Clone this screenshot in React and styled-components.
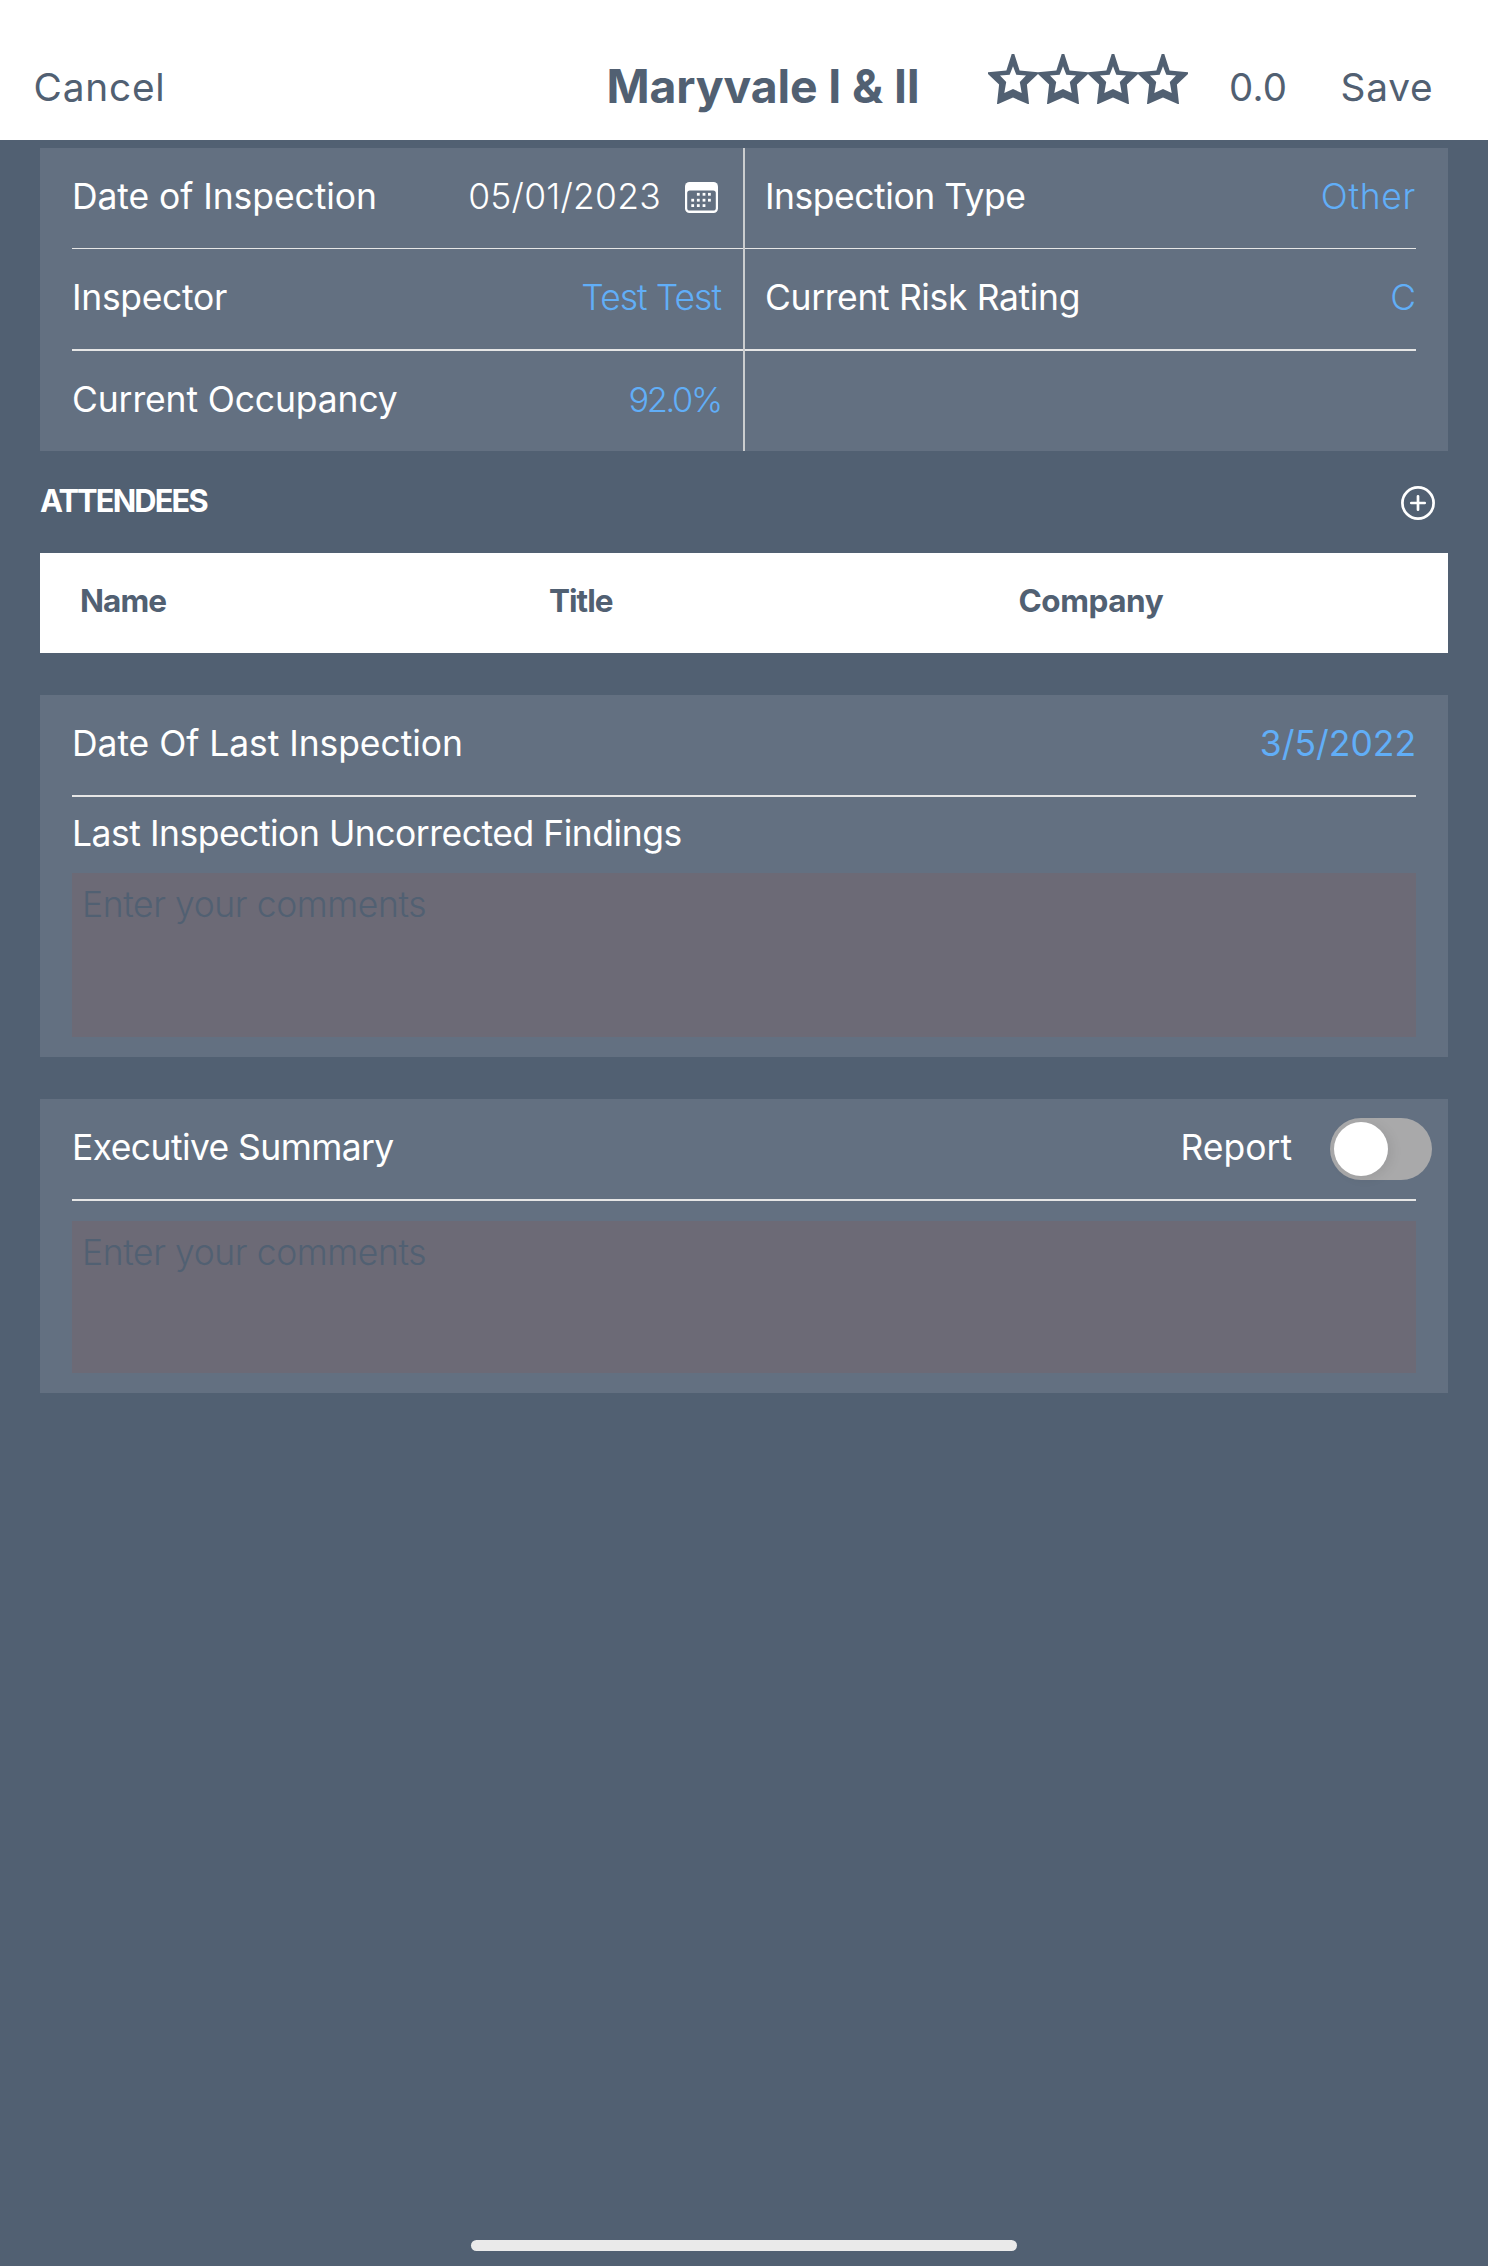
import React, { useState } from "react";
import styled, { createGlobalStyle } from "styled-components";

const slate = "#516072";
const panel = "#637081";
const blue = "#61aef7";
const rule = "#e6e6e6";

const GlobalStyle = createGlobalStyle`
  * { box-sizing: border-box; }
  body {
    margin: 0;
    background: ${slate};
    font-family: Inter, "Liberation Sans", sans-serif;
  }
  button {
    margin: 0;
    padding: 0;
    border: 0;
    background: none;
    color: inherit;
    font: inherit;
    text-align: left;
    cursor: pointer;
  }
`;

const Page = styled.div`
  display: flex;
  flex-direction: column;
  width: 1488px;
  min-height: 2266px;
  background: ${slate};
  color: #fff;
  white-space: nowrap;
`;

const Header = styled.header`
  display: grid;
  grid-template-columns: 573px 381.5px 241px 111.5px auto;
  align-items: center;
  height: 140px;
  padding: 34px 0 0 33.5px;
  background: #fff;
  color: ${slate};
`;

const HeaderAction = styled.button`
  font-size: 38.8px;
  line-height: 46px;
  letter-spacing: 0.8px;
`;

const Score = styled.span`
  font-size: 38.4px;
  line-height: 46px;
  letter-spacing: 0.2px;
`;

const Title = styled.h1`
  margin: 0 0 2px;
  font-size: 46.3px;
  line-height: 56px;
  font-weight: 700;
  letter-spacing: -0.1px;
`;

const Stars = styled.div`
  display: flex;
  margin-bottom: 16px;
`;

const Main = styled.main`
  display: flex;
  flex-direction: column;
  padding: 8px 40px 0;
`;

const Card = styled.section`
  margin-top: 42px;
  padding: 0 32px 20px;
  background: ${panel};
`;

const DetailCard = styled.section`
  display: grid;
  grid-template-columns: 705px 703px;
  background: ${panel};
`;

const DetailColumn = styled.div`
  padding: ${(p) => (p.$first ? "0 0 0 32px" : "0 32px 0 0")};
  border-right: ${(p) => (p.$first ? "2px solid #cbcdcf" : "0")};
`;

const Row = styled.div`
  display: flex;
  align-items: center;
  height: ${(p) => 100 + (p.$line || 0)}px;
  padding: 0 ${(p) => p.$right || 0}px 0 ${(p) => p.$left || 0}px;
  border-bottom: ${(p) => p.$line || 0}px solid ${rule};
`;

const Label = styled.span`
  margin-right: auto;
  padding-bottom: 3px;
  font-size: 35.46px;
  line-height: 44px;
  letter-spacing: ${(p) => p.$track || 0}px;
`;

const Value = styled.span`
  padding-bottom: 3px;
  font-size: ${(p) => p.$size || 35.46}px;
  line-height: 44px;
  font-weight: ${(p) => p.$weight || 300};
  letter-spacing: ${(p) => p.$track || 0}px;
  color: ${(p) => (p.$plain ? "#fff" : blue)};
`;

const IconButton = styled.button`
  display: flex;
  margin: ${(p) => p.$margin || 0};
`;

const SectionHead = styled.div`
  display: flex;
  align-items: center;
  justify-content: space-between;
  height: 102px;
  padding: 2px 13px 0 0;
`;

const SectionTitle = styled.h2`
  margin: 0;
  padding-bottom: 5px;
  font-size: 30.8px;
  line-height: 40px;
  font-weight: 700;
  letter-spacing: -1.85px;
`;

const TableHead = styled.div`
  display: grid;
  grid-template-columns: 469px 469.5px auto;
  align-items: center;
  height: 100px;
  padding: 0 0 4px 40px;
  background: #fff;
  color: ${slate};
`;

const HeadCell = styled.span`
  font-size: 31.5px;
  line-height: 40px;
  font-weight: 700;
  letter-spacing: ${(p) => p.$track}px;
`;

const SubHeading = styled.div`
  display: flex;
  align-items: center;
  height: 76px;
`;

const Comments = styled.textarea`
  display: block;
  width: 100%;
  height: ${(p) => p.$height}px;
  margin: ${(p) => p.$gap || 0}px 0 0;
  padding: 10px 9px 9px 10px;
  border: 0;
  outline: 0;
  resize: none;
  background: #6c6a76;
  color: #fff;
  font-family: inherit;
  font-size: 35.46px;
  line-height: 44px;
  font-weight: 300;
  letter-spacing: -0.4px;
  &::placeholder {
    color: ${slate};
    opacity: 1;
  }
`;

const Toggle = styled.button`
  display: flex;
  align-items: center;
  justify-content: ${(p) => (p.$on ? "flex-end" : "flex-start")};
  width: 102px;
  height: 62px;
  margin: 0 -16px 0 38px;
  padding: 0 4px;
  border-radius: 31px;
  background: ${(p) => (p.$on ? blue : "#a9a9aa")};
`;

const Knob = styled.span`
  width: 54px;
  height: 54px;
  border-radius: 50%;
  background: #fff;
  box-shadow: 4px 2px 12px rgba(0, 0, 0, 0.08);
`;

const Footer = styled.footer`
  display: flex;
  justify-content: center;
  margin-top: auto;
  padding-bottom: 15px;
`;

const HomeIndicator = styled.div`
  width: 546px;
  height: 11px;
  border-radius: 5.5px;
  background: #eaeaea;
`;

function Star() {
  return (
    <svg width="50" height="50" viewBox="0 0 50 50" aria-hidden="true">
      <path
        fill={slate}
        fillRule="evenodd"
        d="M23.7 0h2.6L31.6 16.4 50 18.2V20L38.9 30.5 41 50h-1.2L25 43.6 10.2 50H9L11.1 30.5 0 20V18.2L18.4 16.4ZM25 12.2 21.7 20.8 12 21.6 18.2 28 16.3 39 25 35 33.7 39 31.8 28 38 21.6 28.3 20.8Z"
      />
    </svg>
  );
}

const calendarDots = [
  [13.3, 12.3], [19, 12.3], [24.4, 12.3],
  [7.7, 18.2], [13.3, 18.2], [19, 18.2], [24.4, 18.2],
  [7.7, 23.6], [13.3, 23.6], [19, 23.6],
];

function CalendarIcon() {
  return (
    <svg width="33" height="31" viewBox="0 0 33 31" aria-hidden="true">
      <rect width="33" height="31" rx="4.5" fill="#fff" />
      <rect x="2.2" y="8.4" width="28.6" height="20.2" rx="2.6" fill={panel} />
      {calendarDots.map(([x, y]) => (
        <rect key={`${x}-${y}`} x={x - 1.4} y={y - 1.4} width="2.8" height="2.8" fill="#fff" />
      ))}
    </svg>
  );
}

function PlusIcon() {
  return (
    <svg width="34" height="34" viewBox="0 0 34 34" fill="none" stroke="#fff" aria-hidden="true">
      <circle cx="17" cy="17" r="15.6" strokeWidth="2.7" />
      <path d="M17 10.3v13.4M10.3 17h13.4" strokeWidth="2.7" strokeLinecap="round" />
    </svg>
  );
}

export default function App() {
  const [report, setReport] = useState(false);

  return (
    <>
      <GlobalStyle />
      <Page>
        <Header>
          <HeaderAction>Cancel</HeaderAction>
          <Title>Maryvale I &amp; II</Title>
          <Stars>
            <Star />
            <Star />
            <Star />
            <Star />
          </Stars>
          <Score>0.0</Score>
          <HeaderAction>Save</HeaderAction>
        </Header>

        <Main>
          <DetailCard>
            <DetailColumn $first>
              <Row $line={1} $right={21}>
                <Label $track={-0.06}>Date of Inspection</Label>
                <Value $plain $track={0.25}>05/01/2023</Value>
                <IconButton $margin="0 4px 1px 24px" aria-label="Pick a date">
                  <CalendarIcon />
                </IconButton>
              </Row>
              <Row $line={2} $right={22}>
                <Label $track={-0.29}>Inspector</Label>
                <Value $track={-0.97}>Test Test</Value>
              </Row>
              <Row $right={22}>
                <Label $track={-0.12}>Current Occupancy</Label>
                <Value $size={34.4} $track={-2.3}>92.0%</Value>
              </Row>
            </DetailColumn>
            <DetailColumn>
              <Row $line={1} $left={20}>
                <Label $track={-0.45}>Inspection Type</Label>
                <Value $track={0.7}>Other</Value>
              </Row>
              <Row $line={2} $left={20}>
                <Label $track={-0.35}>Current Risk Rating</Label>
                <Value>C</Value>
              </Row>
              <Row />
            </DetailColumn>
          </DetailCard>

          <SectionHead>
            <SectionTitle>ATTENDEES</SectionTitle>
            <IconButton aria-label="Add attendee">
              <PlusIcon />
            </IconButton>
          </SectionHead>
          <TableHead>
            <HeadCell $track={-0.95}>Name</HeadCell>
            <HeadCell $track={-1}>Title</HeadCell>
            <HeadCell $track={-0.45}>Company</HeadCell>
          </TableHead>

          <Card>
            <Row $line={2}>
              <Label $track={-0.05}>Date Of Last Inspection</Label>
              <Value $weight={400}>3/5/2022</Value>
            </Row>
            <SubHeading>
              <Label $track={-0.47}>Last Inspection Uncorrected Findings</Label>
            </SubHeading>
            <Comments $height={164} placeholder="Enter your comments" />
          </Card>

          <Card>
            <Row $line={2}>
              <Label $track={-0.57}>Executive Summary</Label>
              <Value $plain $weight={400}>Report</Value>
              <Toggle $on={report} onClick={() => setReport(!report)} aria-label="Report">
                <Knob />
              </Toggle>
            </Row>
            <Comments $height={152} $gap={20} placeholder="Enter your comments" />
          </Card>
        </Main>

        <Footer>
          <HomeIndicator />
        </Footer>
      </Page>
    </>
  );
}
